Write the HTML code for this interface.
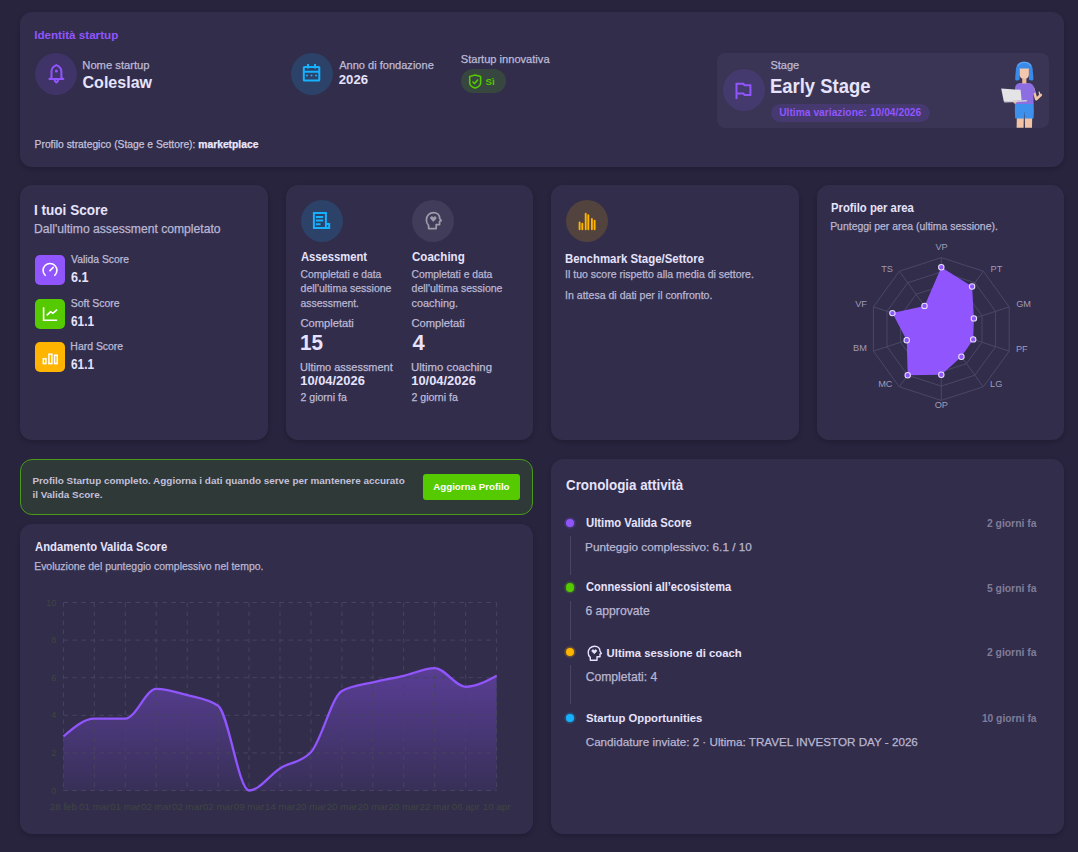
<!DOCTYPE html>
<html><head><meta charset="utf-8">
<style>
*{margin:0;padding:0;box-sizing:border-box}
html,body{width:1078px;height:852px;overflow:hidden;background:#28243d}
body{position:relative;font-family:"Liberation Sans",sans-serif;color:#e7e3fc}
.card{position:absolute;background:#312d4b;border-radius:12px;box-shadow:0 2px 4px rgba(15,12,30,0.28)}
.t{position:absolute;white-space:nowrap;line-height:1}
.circ{position:absolute;width:42px;height:42px;border-radius:50%}
.circ svg{position:absolute;left:0;top:0}
.sq{position:absolute;width:30px;height:30px;border-radius:5px}
.sq svg{position:absolute;left:0;top:0}
.b{font-weight:bold}
</style></head><body>

<!-- TOP CARD -->
<div class="card" style="left:20px;top:12px;width:1044px;height:155px"></div>

<div class="circ" style="left:35px;top:53px;background:#403367"><svg width="42" height="42" viewBox="0 0 42 42" fill="none" stroke="#9155fd" stroke-width="2" stroke-linejoin="round" stroke-linecap="round"><path d="M16.5,24.6 V18.4 C16.5,15.6 18.6,13.3 21.4,12.1 C24.2,13.3 26.4,15.6 26.4,18.4 V24.6 L28.4,26 H14.4 Z"/><path d="M19.7,27.8 L21.4,29.5 L23.1,27.8"/><circle cx="21.4" cy="18.1" r="1.5" fill="#9155fd" stroke="none"/></svg></div>

<div class="circ" style="left:291px;top:53px;background:#2d4268"><svg width="42" height="42" viewBox="0 0 42 42" fill="none" stroke="#16b1ff" stroke-width="2"><rect x="12.8" y="14" width="15.5" height="13.6" rx="0.6"/><path d="M12.8,18.8 H28.3 M17,11 V15.6 M24,11 V15.6"/><g fill="#16b1ff" stroke="none"><circle cx="16" cy="22.4" r="1"/><circle cx="20.5" cy="22.4" r="1"/><circle cx="25" cy="22.4" r="1"/></g></svg></div>

<div style="position:absolute;left:461px;top:69px;width:45px;height:24px;border-radius:12px;background:#37463f"></div>
<svg style="position:absolute;left:461px;top:66px" width="30" height="30" viewBox="0 0 30 30" fill="none" stroke="#56ca00" stroke-width="1.6" stroke-linejoin="round" stroke-linecap="round"><path d="M8.7,10.5 L14.2,9 L19.6,10.5 V17 C19.6,19.3 17.4,21 14.2,22.1 C11,21 8.7,19.3 8.7,17 Z"/><path d="M11.9,16 L13.6,17.6 L16.6,14"/></svg>

<div style="position:absolute;left:717px;top:53px;width:332px;height:75px;border-radius:8px;background:#3a3554"></div>
<div class="circ" style="left:723px;top:69px;background:#453a6e"><svg width="42" height="42" viewBox="0 0 42 42" fill="none" stroke="#9155fd" stroke-width="2" stroke-linejoin="miter"><path d="M13.5,30 V14.8 H20.4 L21.6,16.3 H27.4 V26 H21.6 L20.4,24.4 H13.5"/></svg></div>
<div style="position:absolute;left:771px;top:104px;width:159px;height:18px;border-radius:9px;background:#45396f"></div>

<svg style="position:absolute;left:995px;top:58px" width="54" height="72" viewBox="995 58 54 72">
<path d="M1016.8,117.5 L1016.6,127.8 L1023.6,127.8 L1023.8,117.5 Z M1024.8,117.5 L1025,127.8 L1032,127.8 L1032.2,117.5 Z" fill="#f0c3a6"/>
<path d="M1015,103.5 C1014.8,109 1014.8,114 1015.2,118.4 L1023.9,118.4 L1024.3,111 L1024.7,118.4 L1033.5,118.4 C1034,113 1033.9,108 1033.6,103.5 Z" fill="#3d90ec"/>
<path d="M1033,88 L1036.2,99.2 L1040.8,95" fill="none" stroke="#f0c3a6" stroke-width="2.6" stroke-linecap="round" stroke-linejoin="round"/>
<path d="M1040,95.5 L1039.2,92.2" stroke="#f0c3a6" stroke-width="1.3" stroke-linecap="round"/>
<path d="M1019.5,83 C1016.5,83.8 1015.2,85.5 1015,88.5 L1015.2,104 L1033.6,104 L1033.4,93.5 L1035.2,92.8 C1034.8,88 1033.5,84.2 1029.5,83 Z" fill="#8d6ee2"/>
<rect x="1022.2" y="78.5" width="4.2" height="5" fill="#eab89c"/>
<path d="M1024.3,61.8 C1029.2,61.8 1032.4,64.5 1032.7,69.5 C1032.9,73 1033.6,77 1033.3,80 C1031.8,80.9 1030,80.6 1028.9,79.6 L1028.9,69.3 L1019.6,69.3 L1019.6,79.6 C1018.5,80.6 1016.8,80.9 1015.3,80 C1015,77 1015.7,73 1015.9,69.5 C1016.2,64.5 1019.4,61.8 1024.3,61.8 Z" fill="#3a8ae8"/>
<path d="M1019.6,68.6 H1028.9 V74.8 C1028.9,77.6 1026.9,79 1024.3,79 C1021.7,79 1019.6,77.6 1019.6,74.8 Z" fill="#f2c8ae"/>
<path d="M1017.5,66 C1019,63.2 1021.5,62.3 1024.3,62.3 C1027,62.3 1029.5,63.2 1031,66" fill="none" stroke="#5aa6f2" stroke-width="1.2"/>
<path d="M1001.2,88.6 L1020.6,89.8 L1021.6,100.6 L1003.8,101.4 Z" fill="#e4e4e6"/>
<path d="M1003.8,101.2 L1027.2,100 L1026.6,101.6 L1004.6,102.6 Z" fill="#cfcfd3"/>
<circle cx="1015" cy="102.3" r="1.4" fill="#f0c3a6"/>
</svg>

<!-- ROW 2 -->
<div class="card" style="left:20px;top:185px;width:248px;height:255px"></div>
<div class="card" style="left:286px;top:185px;width:247px;height:255px"></div>
<div class="card" style="left:551px;top:185px;width:248px;height:255px"></div>
<div class="card" style="left:817px;top:185px;width:247px;height:255px"></div>


<!-- card1 squares -->
<div class="sq" style="left:35px;top:255px;background:#9155fd"><svg width="30" height="30" viewBox="0 0 30 30" fill="none" stroke="#fff" stroke-width="1.6" stroke-linecap="round"><path d="M10.2,20.3 A6.9,6.9 0 1 1 19.8,20.3"/><path d="M15,15.6 L18.2,12.4"/></svg></div>
<div class="sq" style="left:35px;top:299px;background:#56ca00"><svg width="30" height="30" viewBox="0 0 30 30" fill="none" stroke="#fff" stroke-width="1.6" stroke-linejoin="miter"><path d="M8.6,8.2 V21.3 H22.1"/><path d="M11.7,16.4 L15.5,12.8 L17.9,14.3 L22,10.6"/></svg></div>
<div class="sq" style="left:35px;top:342px;background:#ffb400"><svg width="30" height="30" viewBox="0 0 30 30" fill="none" stroke="#fff" stroke-width="1.5"><rect x="8.3" y="16.7" width="2.6" height="4.9"/><rect x="13.9" y="12.2" width="3" height="9.4"/><rect x="19.6" y="13.2" width="2.6" height="8.4"/></svg></div>

<!-- card2 circles -->
<div class="circ" style="left:301px;top:200px;background:#2d4268"><svg width="42" height="42" viewBox="0 0 42 42" fill="none" stroke="#16b1ff" stroke-width="2"><path d="M24.9,28 H12.9 V12.9 H24.9 Z"/><path d="M24.9,24 H28.2 V28 H24.9"/><path d="M15,17 H22.2 M15,20.4 H22.2 M15,24.3 H19.5"/></svg></div>
<div class="circ" style="left:412px;top:200px;background:#403c59"><svg width="42" height="42" viewBox="0 0 42 42" fill="none" stroke="#9e9bab" stroke-width="1.7" stroke-linejoin="round"><path d="M16.6,28.6 V25.4 C15,24 14.4,22.2 14.4,20 C14.4,15.6 17.6,12.6 21.6,12.6 C25.2,12.6 27.6,15 27.6,18.2 L29.2,20.8 L27.6,21.4 V24.6 H24.2 V28.6 Z"/><path d="M21.3,21.4 L18.9,19 C18.2,18.2 18.4,17 19.4,16.7 C20.2,16.5 20.9,17 21.3,17.6 C21.7,17 22.4,16.5 23.2,16.7 C24.2,17 24.4,18.2 23.7,19 Z" fill="#9e9bab" stroke-width="0.8"/></svg></div>

<!-- card3 circle -->
<div class="circ" style="left:566px;top:200px;background:#52433f"><svg width="42" height="42" viewBox="0 0 42 42" fill="none" stroke="#ffb400" stroke-width="1.9" stroke-linecap="round"><path d="M13.6,29.2 V22.4 M16.3,29.2 V23.8 M19.7,29.2 V13.8 M22.3,29.2 V15.3 M25.9,29.2 V19 M28.6,29.2 V20.6"/></svg></div>

<!-- ROW 3 -->
<div style="position:absolute;left:20px;top:459px;width:513px;height:56px;border-radius:12px;background:#2e3938;border:1px solid #4a9a1a"></div>
<div class="card" style="left:20px;top:524px;width:513px;height:310px"></div>
<div class="card" style="left:551px;top:459px;width:513px;height:375px"></div>

<svg style="position:absolute;left:817px;top:185px" width="247" height="255" viewBox="817 185 247 255">
<g fill="none" stroke="#4b4766" stroke-width="1"><polygon points="941.3,314.7 949.7,317.4 954.9,324.6 954.9,333.4 949.7,340.6 941.3,343.3 932.9,340.6 927.7,333.4 927.7,324.6 932.9,317.4"/><polygon points="941.3,300.4 958.1,305.9 968.5,320.2 968.5,337.8 958.1,352.1 941.3,357.6 924.5,352.1 914.1,337.8 914.1,320.2 924.5,305.9"/><polygon points="941.3,286.2 966.5,294.3 982.0,315.8 982.0,342.2 966.5,363.7 941.3,371.8 916.1,363.7 900.6,342.2 900.6,315.8 916.1,294.3"/><polygon points="941.3,271.9 974.9,282.8 995.6,311.3 995.6,346.7 974.9,375.2 941.3,386.1 907.7,375.2 887.0,346.7 887.0,311.3 907.7,282.8"/><polygon points="941.3,257.6 983.3,271.2 1009.2,306.9 1009.2,351.1 983.3,386.8 941.3,400.4 899.3,386.8 873.4,351.1 873.4,306.9 899.3,271.2"/><line x1="941.3" y1="329.0" x2="941.3" y2="257.6"/><line x1="941.3" y1="329.0" x2="983.3" y2="271.2"/><line x1="941.3" y1="329.0" x2="1009.2" y2="306.9"/><line x1="941.3" y1="329.0" x2="1009.2" y2="351.1"/><line x1="941.3" y1="329.0" x2="983.3" y2="386.8"/><line x1="941.3" y1="329.0" x2="941.3" y2="400.4"/><line x1="941.3" y1="329.0" x2="899.3" y2="386.8"/><line x1="941.3" y1="329.0" x2="873.4" y2="351.1"/><line x1="941.3" y1="329.0" x2="873.4" y2="306.9"/><line x1="941.3" y1="329.0" x2="899.3" y2="271.2"/></g>
<polygon points="941.3,267.3 972.1,286.5 973.9,318.4 973.2,339.4 961.4,356.7 941.3,374.7 907.7,375.2 906.7,340.3 892.4,313.1 924.5,305.9" fill="#9155fd"/>
<g fill="#9155fd" stroke="#e7e3fc" stroke-width="1.05"><circle cx="941.3" cy="267.3" r="2.7"/><circle cx="972.1" cy="286.5" r="2.7"/><circle cx="973.9" cy="318.4" r="2.7"/><circle cx="973.2" cy="339.4" r="2.7"/><circle cx="961.4" cy="356.7" r="2.7"/><circle cx="941.3" cy="374.7" r="2.7"/><circle cx="907.7" cy="375.2" r="2.7"/><circle cx="906.7" cy="340.3" r="2.7"/><circle cx="892.4" cy="313.1" r="2.7"/><circle cx="924.5" cy="305.9" r="2.7"/></g>
<g font-family="Liberation Sans" font-size="9.2" fill="#a09cb6" text-anchor="middle"><text x="941.6" y="250.2">VP</text><text x="996.4" y="272.1">PT</text><text x="1023.6" y="307.4">GM</text><text x="1021.8" y="351.6">PF</text><text x="996.2" y="387.3">LG</text><text x="941.3" y="407.8">OP</text><text x="885.3" y="387.3">MC</text><text x="860" y="351.4">BM</text><text x="861" y="307.4">VF</text><text x="887" y="272.1">TS</text></g>
</svg>
<svg style="position:absolute;left:20px;top:524px" width="513" height="310" viewBox="20 524 513 310">
<defs><linearGradient id="ag" x1="0" y1="668" x2="0" y2="790.5" gradientUnits="userSpaceOnUse"><stop offset="0" stop-color="#9155fd" stop-opacity="0.42"/><stop offset="1" stop-color="#9155fd" stop-opacity="0.07"/></linearGradient></defs>
<path d="M63.4,736.5 C73.7,727.6 84.0,718.7 94.3,718.7 C104.7,718.7 115.0,718.7 125.3,718.7 C135.6,718.7 145.9,688.9 156.2,688.9 C166.5,688.9 176.8,692.2 187.2,695.1 C197.5,697.9 207.8,698.6 218.1,705.8 C228.4,712.9 238.7,790.5 249.0,790.5 C259.4,790.5 269.7,774.8 280.0,768.4 C290.3,762.0 300.6,763.0 310.9,752.2 C321.2,741.5 331.5,697.0 341.9,691.1 C352.2,685.2 362.5,684.9 372.8,682.3 C383.1,679.8 393.4,678.1 403.7,675.8 C414.1,673.4 424.4,668.1 434.7,668.1 C445.0,668.1 455.3,686.8 465.6,686.8 C475.9,686.8 486.2,681.3 496.6,675.8 L496.6,790.5 L63.4,790.5 Z" fill="url(#ag)"/>
<g stroke="#48445f" stroke-width="1" stroke-dasharray="4.5 4.5"><line x1="63.4" y1="602.5" x2="496.6" y2="602.5"/><line x1="63.4" y1="640.1" x2="496.6" y2="640.1"/><line x1="63.4" y1="677.7" x2="496.6" y2="677.7"/><line x1="63.4" y1="715.3" x2="496.6" y2="715.3"/><line x1="63.4" y1="752.9" x2="496.6" y2="752.9"/><line x1="63.4" y1="790.5" x2="496.6" y2="790.5"/><line x1="63.4" y1="602.5" x2="63.4" y2="790.5"/><line x1="94.3" y1="602.5" x2="94.3" y2="790.5"/><line x1="125.3" y1="602.5" x2="125.3" y2="790.5"/><line x1="156.2" y1="602.5" x2="156.2" y2="790.5"/><line x1="187.2" y1="602.5" x2="187.2" y2="790.5"/><line x1="218.1" y1="602.5" x2="218.1" y2="790.5"/><line x1="249.0" y1="602.5" x2="249.0" y2="790.5"/><line x1="280.0" y1="602.5" x2="280.0" y2="790.5"/><line x1="310.9" y1="602.5" x2="310.9" y2="790.5"/><line x1="341.9" y1="602.5" x2="341.9" y2="790.5"/><line x1="372.8" y1="602.5" x2="372.8" y2="790.5"/><line x1="403.7" y1="602.5" x2="403.7" y2="790.5"/><line x1="434.7" y1="602.5" x2="434.7" y2="790.5"/><line x1="465.6" y1="602.5" x2="465.6" y2="790.5"/><line x1="496.6" y1="602.5" x2="496.6" y2="790.5"/></g>
<path d="M63.4,736.5 C73.7,727.6 84.0,718.7 94.3,718.7 C104.7,718.7 115.0,718.7 125.3,718.7 C135.6,718.7 145.9,688.9 156.2,688.9 C166.5,688.9 176.8,692.2 187.2,695.1 C197.5,697.9 207.8,698.6 218.1,705.8 C228.4,712.9 238.7,790.5 249.0,790.5 C259.4,790.5 269.7,774.8 280.0,768.4 C290.3,762.0 300.6,763.0 310.9,752.2 C321.2,741.5 331.5,697.0 341.9,691.1 C352.2,685.2 362.5,684.9 372.8,682.3 C383.1,679.8 393.4,678.1 403.7,675.8 C414.1,673.4 424.4,668.1 434.7,668.1 C445.0,668.1 455.3,686.8 465.6,686.8 C475.9,686.8 486.2,681.3 496.6,675.8" fill="none" stroke="#9155fd" stroke-width="2.3"/>
<g font-family="Liberation Sans" font-size="9" fill="#3f4641" text-anchor="end"><text x="56.3" y="605.6">10</text><text x="56.3" y="643.2">8</text><text x="56.3" y="680.8">6</text><text x="56.3" y="718.4">4</text><text x="56.3" y="756.0">2</text><text x="56.3" y="793.6">0</text></g>
<g font-family="Liberation Sans" font-size="9.8" fill="#3f4641" text-anchor="middle"><text x="63.4" y="809.8">28 feb</text><text x="94.3" y="809.8">01 mar</text><text x="125.3" y="809.8">01 mar</text><text x="156.2" y="809.8">02 mar</text><text x="187.2" y="809.8">02 mar</text><text x="218.1" y="809.8">02 mar</text><text x="249.0" y="809.8">09 mar</text><text x="280.0" y="809.8">14 mar</text><text x="310.9" y="809.8">20 mar</text><text x="341.9" y="809.8">20 mar</text><text x="372.8" y="809.8">20 mar</text><text x="403.7" y="809.8">20 mar</text><text x="434.7" y="809.8">22 mar</text><text x="465.6" y="809.8">06 apr</text><text x="496.6" y="809.8">10 apr</text></g>
</svg>
<div style="position:absolute;left:423px;top:474px;width:97px;height:26px;border-radius:3px;background:#56ca00"></div>
<div style="position:absolute;left:565.9px;top:518.9px;width:8.2px;height:8.2px;border-radius:50%;background:#9155fd;box-shadow:0 0 0 1.8px rgba(145,85,253,0.22)"></div><div style="position:absolute;left:565.9px;top:583.4px;width:8.2px;height:8.2px;border-radius:50%;background:#56ca00;box-shadow:0 0 0 1.8px rgba(86,202,0,0.22)"></div><div style="position:absolute;left:566.1px;top:647.9px;width:8.2px;height:8.2px;border-radius:50%;background:#ffb400;box-shadow:0 0 0 1.8px rgba(255,180,0,0.22)"></div><div style="position:absolute;left:566.1px;top:714.0px;width:8.2px;height:8.2px;border-radius:50%;background:#16b1ff;box-shadow:0 0 0 1.8px rgba(22,177,255,0.22)"></div><div style="position:absolute;left:570px;top:536.2px;width:1px;height:38.8px;background:#4a4662"></div><div style="position:absolute;left:570px;top:601px;width:1px;height:39.0px;background:#4a4662"></div><div style="position:absolute;left:570px;top:665px;width:1px;height:39.2px;background:#4a4662"></div>
<svg style="position:absolute;left:584px;top:643px" width="20" height="20" viewBox="0 0 20 20" fill="none" stroke="#e7e3fc" stroke-width="1.4" stroke-linejoin="round"><path d="M6.3,17.2 V14.4 C4.9,13.2 4.2,11.6 4.2,9.7 C4.2,5.8 7,3.2 10.6,3.2 C13.8,3.2 16,5.3 16,8.2 L17.4,10.5 L16,11 V13.8 H13 V17.2 Z"/><path d="M10.3,10.8 L8.2,8.7 C7.6,8 7.8,7 8.7,6.7 C9.4,6.5 10,7 10.3,7.5 C10.6,7 11.2,6.5 11.9,6.7 C12.8,7 13,8 12.4,8.7 Z" fill="#e7e3fc" stroke-width="0.6"/></svg>

<div class="t" style="left:34.18px;top:29.10px;font-size:11.65px;font-weight:bold;color:#9155fd">Identità startup</div>
<div class="t" style="left:82.30px;top:60.10px;font-size:11.21px;-webkit-text-stroke:0.25px currentColor;color:#bebad6">Nome startup</div>
<div class="t" style="left:82.56px;top:74.12px;font-size:16.04px;font-weight:bold;color:#e7e3fc">Coleslaw</div>
<div class="t" style="left:339.20px;top:60.10px;font-size:11.05px;-webkit-text-stroke:0.25px currentColor;color:#bebad6">Anno di fondazione</div>
<div class="t" style="left:338.81px;top:73.10px;font-size:13.16px;font-weight:bold;color:#e7e3fc">2026</div>
<div class="t" style="left:460.75px;top:54.11px;font-size:11.10px;-webkit-text-stroke:0.25px currentColor;color:#bebad6">Startup innovativa</div>
<div class="t" style="left:485.41px;top:77.11px;font-size:9.76px;font-weight:bold;color:#56ca00">Sì</div>
<div class="t" style="left:770.45px;top:60.11px;font-size:11.00px;-webkit-text-stroke:0.25px currentColor;color:#bebad6">Stage</div>
<div class="t" style="left:770.41px;top:76.11px;font-size:20.35px;font-weight:bold;color:#e7e3fc;transform:scaleX(0.9063);transform-origin:0 0">Early Stage</div>
<div class="t" style="left:779.18px;top:108.11px;font-size:10.28px;font-weight:bold;color:#9155fd">Ultima variazione: 10/04/2026</div>
<div class="t" style="left:34.58px;top:140.11px;font-size:10.30px;-webkit-text-stroke:0.25px currentColor;color:#c4c0da">Profilo strategico (Stage e Settore): <b style='color:#ece8ff'>marketplace</b></div>
<div class="t" style="left:34.35px;top:203.10px;font-size:14.10px;font-weight:bold;color:#e7e3fc;transform:scaleX(0.9621);transform-origin:0 0">I tuoi Score</div>
<div class="t" style="left:34.03px;top:223.10px;font-size:12.15px;-webkit-text-stroke:0.25px currentColor;color:#bab6d2">Dall'ultimo assessment completato</div>
<div class="t" style="left:71.10px;top:255.12px;font-size:10.34px;-webkit-text-stroke:0.25px currentColor;color:#bebad6">Valida Score</div>
<div class="t" style="left:70.70px;top:271.10px;font-size:13.95px;font-weight:bold;color:#e7e3fc;transform:scaleX(0.9027);transform-origin:0 0">6.1</div>
<div class="t" style="left:70.68px;top:299.10px;font-size:10.48px;-webkit-text-stroke:0.25px currentColor;color:#bebad6">Soft Score</div>
<div class="t" style="left:70.73px;top:315.10px;font-size:13.95px;font-weight:bold;color:#e7e3fc;transform:scaleX(0.8470);transform-origin:0 0">61.1</div>
<div class="t" style="left:70.36px;top:342.10px;font-size:10.45px;-webkit-text-stroke:0.25px currentColor;color:#bebad6">Hard Score</div>
<div class="t" style="left:70.73px;top:358.10px;font-size:13.95px;font-weight:bold;color:#e7e3fc;transform:scaleX(0.8470);transform-origin:0 0">61.1</div>
<div class="t" style="left:300.66px;top:251.10px;font-size:12.50px;font-weight:bold;color:#e7e3fc;transform:scaleX(0.8973);transform-origin:0 0">Assessment</div>
<div class="t" style="left:300.48px;top:270.12px;font-size:10.32px;-webkit-text-stroke:0.25px currentColor;color:#bab6d2">Completati e data</div>
<div class="t" style="left:300.58px;top:283.11px;font-size:10.52px;-webkit-text-stroke:0.25px currentColor;color:#bab6d2">dell'ultima sessione</div>
<div class="t" style="left:300.58px;top:299.11px;font-size:10.42px;-webkit-text-stroke:0.25px currentColor;color:#bab6d2">assessment.</div>
<div class="t" style="left:300.44px;top:318.11px;font-size:11.18px;-webkit-text-stroke:0.25px currentColor;color:#bebad6">Completati</div>
<div class="t" style="left:299.76px;top:333.10px;font-size:21.37px;font-weight:bold;color:#e7e3fc;transform:scaleX(0.9685);transform-origin:0 0">15</div>
<div class="t" style="left:300.12px;top:362.11px;font-size:10.97px;-webkit-text-stroke:0.25px currentColor;color:#bebad6">Ultimo assessment</div>
<div class="t" style="left:300.22px;top:375.11px;font-size:12.92px;font-weight:bold;color:#e7e3fc">10/04/2026</div>
<div class="t" style="left:300.47px;top:392.10px;font-size:10.55px;-webkit-text-stroke:0.25px currentColor;color:#bebad6">2 giorni fa</div>
<div class="t" style="left:411.54px;top:251.10px;font-size:12.50px;font-weight:bold;color:#e7e3fc;transform:scaleX(0.9261);transform-origin:0 0">Coaching</div>
<div class="t" style="left:411.48px;top:270.12px;font-size:10.32px;-webkit-text-stroke:0.25px currentColor;color:#bab6d2">Completati e data</div>
<div class="t" style="left:411.58px;top:283.11px;font-size:10.52px;-webkit-text-stroke:0.25px currentColor;color:#bab6d2">dell'ultima sessione</div>
<div class="t" style="left:411.57px;top:298.11px;font-size:10.87px;-webkit-text-stroke:0.25px currentColor;color:#bab6d2">coaching.</div>
<div class="t" style="left:411.44px;top:318.11px;font-size:11.18px;-webkit-text-stroke:0.25px currentColor;color:#bebad6">Completati</div>
<div class="t" style="left:412.46px;top:332.12px;font-size:21.92px;font-weight:bold;color:#e7e3fc">4</div>
<div class="t" style="left:411.09px;top:362.10px;font-size:11.38px;-webkit-text-stroke:0.25px currentColor;color:#bebad6">Ultimo coaching</div>
<div class="t" style="left:411.22px;top:375.11px;font-size:12.92px;font-weight:bold;color:#e7e3fc">10/04/2026</div>
<div class="t" style="left:411.47px;top:392.10px;font-size:10.55px;-webkit-text-stroke:0.25px currentColor;color:#bebad6">2 giorni fa</div>
<div class="t" style="left:565.20px;top:253.10px;font-size:12.06px;font-weight:bold;color:#e7e3fc;transform:scaleX(0.9485);transform-origin:0 0">Benchmark Stage/Settore</div>
<div class="t" style="left:565.05px;top:269.10px;font-size:10.52px;-webkit-text-stroke:0.25px currentColor;color:#bab6d2">Il tuo score rispetto alla media di settore.</div>
<div class="t" style="left:565.05px;top:290.11px;font-size:10.57px;-webkit-text-stroke:0.25px currentColor;color:#bab6d2">In attesa di dati per il confronto.</div>
<div class="t" style="left:830.61px;top:202.11px;font-size:12.50px;font-weight:bold;color:#e7e3fc;transform:scaleX(0.9036);transform-origin:0 0">Profilo per area</div>
<div class="t" style="left:830.16px;top:222.11px;font-size:10.45px;-webkit-text-stroke:0.25px currentColor;color:#bab6d2">Punteggi per area (ultima sessione).</div>
<div class="t" style="left:32.41px;top:476.11px;font-size:9.92px;font-weight:bold;color:#c4c0da">Profilo Startup completo. Aggiorna i dati quando serve per mantenere accurato</div>
<div class="t" style="left:32.40px;top:490.12px;font-size:9.94px;font-weight:bold;color:#c4c0da">il Valida Score.</div>
<div class="t" style="left:433.21px;top:482.11px;font-size:9.75px;font-weight:bold;color:#ffffff">Aggiorna Profilo</div>
<div class="t" style="left:35.16px;top:542.11px;font-size:11.92px;font-weight:bold;color:#e7e3fc;transform:scaleX(0.9471);transform-origin:0 0">Andamento Valida Score</div>
<div class="t" style="left:34.16px;top:562.10px;font-size:10.48px;-webkit-text-stroke:0.25px currentColor;color:#bab6d2">Evoluzione del punteggio complessivo nel tempo.</div>
<div class="t" style="left:565.87px;top:478.11px;font-size:14.68px;font-weight:bold;color:#e7e3fc;transform:scaleX(0.9098);transform-origin:0 0">Cronologia attività</div>
<div class="t" style="left:585.52px;top:518.11px;font-size:11.92px;font-weight:bold;color:#e7e3fc;transform:scaleX(0.9499);transform-origin:0 0">Ultimo Valida Score</div>
<div class="t" style="left:585.06px;top:541.11px;font-size:11.78px;-webkit-text-stroke:0.25px currentColor;color:#bab6d2">Punteggio complessivo: 6.1 / 10</div>
<div class="t" style="left:585.76px;top:582.11px;font-size:11.92px;font-weight:bold;color:#e7e3fc;transform:scaleX(0.9295);transform-origin:0 0">Connessioni all’ecosistema</div>
<div class="t" style="left:585.39px;top:605.11px;font-size:12.18px;-webkit-text-stroke:0.25px currentColor;color:#bab6d2">6 approvate</div>
<div class="t" style="left:606.62px;top:648.12px;font-size:11.30px;font-weight:bold;color:#e7e3fc">Ultima sessione di coach</div>
<div class="t" style="left:585.69px;top:671.11px;font-size:12.16px;-webkit-text-stroke:0.25px currentColor;color:#bab6d2">Completati: 4</div>
<div class="t" style="left:585.96px;top:713.11px;font-size:11.28px;font-weight:bold;color:#e7e3fc">Startup Opportunities</div>
<div class="t" style="left:585.72px;top:736.11px;font-size:11.67px;-webkit-text-stroke:0.25px currentColor;color:#bab6d2">Candidature inviate: 2 · Ultima: TRAVEL INVESTOR DAY - 2026</div>
<div class="t" style="left:986.89px;top:519.11px;font-size:10.40px;font-weight:bold;color:#807c98">2 giorni fa</div>
<div class="t" style="left:986.89px;top:584.11px;font-size:10.40px;font-weight:bold;color:#807c98">5 giorni fa</div>
<div class="t" style="left:986.89px;top:648.11px;font-size:10.40px;font-weight:bold;color:#807c98">2 giorni fa</div>
<div class="t" style="left:981.89px;top:714.10px;font-size:10.25px;font-weight:bold;color:#807c98">10 giorni fa</div>
</body></html>
